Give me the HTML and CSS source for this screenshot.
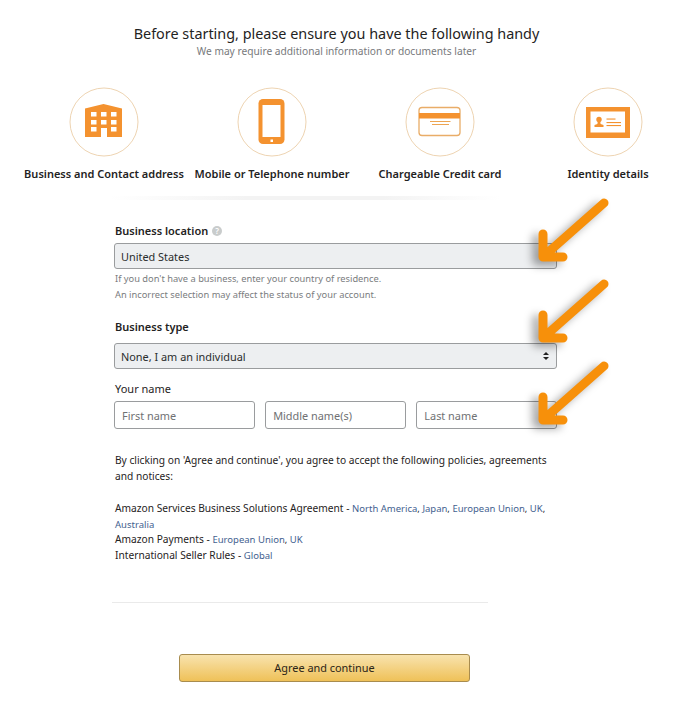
FILE: index.html
```html
<!DOCTYPE html>
<html lang="en">
<head>
    <meta charset="UTF-8">
    <meta name="viewport" content="width=device-width, initial-scale=1.0">
    <title>Before starting</title>
    <link rel="stylesheet" href="styles.css">
</head>
<body>

    <header class="intro">
        <h1>Before starting, please ensure you have the following handy</h1>
        <p>We may require additional information or documents later</p>
    </header>

    <div class="needs">
        <div class="need">
            <svg class="need-icon" width="70" height="70" viewBox="0 0 70 70">
                <circle class="ring" cx="35" cy="35" r="34"/>
                <path class="fill" d="M16 21.5 L34.5 17 L53 21.5 V50 H16 Z"/>
                <g class="hole">
                    <rect x="22" y="25" width="5.5" height="4.5"/>
                    <rect x="32" y="25" width="5.5" height="4.5"/>
                    <rect x="42" y="25" width="5.5" height="4.5"/>
                    <rect x="22" y="33" width="5.5" height="4.5"/>
                    <rect x="32" y="33" width="5.5" height="4.5"/>
                    <rect x="42" y="33" width="5.5" height="4.5"/>
                    <rect x="22" y="40" width="5.5" height="4.5"/>
                    <rect x="42" y="40" width="5.5" height="4.5"/>
                    <rect x="32" y="41" width="6" height="9"/>
                </g>
            </svg>
            <span>Business and Contact address</span>
        </div>
        <div class="need">
            <svg class="need-icon" width="70" height="70" viewBox="0 0 70 70">
                <circle class="ring" cx="35" cy="35" r="34"/>
                <rect class="fill" x="21.5" y="12" width="26" height="45" rx="4.5"/>
                <rect class="hole" x="25.5" y="18" width="18" height="32"/>
                <rect class="hole" x="33.5" y="52.5" width="2.5" height="2.5"/>
            </svg>
            <span>Mobile or Telephone number</span>
        </div>
        <div class="need">
            <svg class="need-icon" width="70" height="70" viewBox="0 0 70 70">
                <circle class="ring" cx="35" cy="35" r="34"/>
                <rect class="card-edge" x="14" y="20.5" width="41" height="28" rx="3"/>
                <rect class="fill" x="14" y="26" width="41" height="5.5"/>
                <rect class="card-line" x="25" y="34" width="20.5" height="1"/>
                <rect class="card-line" x="27" y="37" width="17" height="1"/>
            </svg>
            <span>Chargeable Credit card</span>
        </div>
        <div class="need">
            <svg class="need-icon" width="70" height="70" viewBox="0 0 70 70">
                <circle class="ring" cx="35" cy="35" r="34"/>
                <rect class="fill" x="13" y="20" width="44" height="31"/>
                <rect class="hole" x="17.5" y="24.5" width="34.5" height="21"/>
                <circle class="fill" cx="26" cy="32.5" r="2.7"/>
                <path class="fill" d="M24.8 34 H27.2 L27.6 37 L30.5 38 V40 H21.5 V38 L24.4 37 Z"/>
                <rect class="fill" x="33.5" y="31.5" width="9" height="1.1"/>
                <rect class="fill" x="33.5" y="35" width="14.5" height="1.1"/>
                <rect class="fill" x="33.5" y="38" width="14.5" height="1.1"/>
            </svg>
            <span>Identity details</span>
        </div>
    </div>

    <div class="fold"></div>

    <form class="seller-form">
        <div class="field-label strong">
            Business location
            <span class="help">?</span>
        </div>
        <input class="box filled" type="text" value="United States" readonly>
        <div class="hint first">If you don't have a business, enter your country of residence.</div>
        <div class="hint">An incorrect selection may affect the status of your account.</div>

        <div class="field-label strong type-label">Business type</div>
        <div class="select-wrap">
            <select class="box filled">
                <option>None, I am an individual</option>
            </select>
        </div>

        <div class="field-label name-label">Your name</div>
        <div class="name-row">
            <input class="box" type="text" placeholder="First name">
            <input class="box" type="text" placeholder="Middle name(s)">
            <input class="box" type="text" placeholder="Last name">
        </div>

        <p class="policy-lead">By clicking on 'Agree and continue', you agree to accept the following policies, agreements and notices:</p>

        <p class="policies">
            Amazon Services Business Solutions Agreement - <small><a href="#">North America</a>, <a href="#">Japan</a>, <a href="#">European Union</a>, <a href="#">UK</a>, <a href="#">Australia</a></small><br>
            Amazon Payments - <small><a href="#">European Union</a>, <a href="#">UK</a></small><br>
            International Seller Rules - <small><a href="#">Global</a></small>
        </p>

        <hr class="divider">

        <button class="agree" type="button">Agree and continue</button>
    </form>

    <!-- hand drawn arrows pasted over the screenshot -->
    <svg class="arrows" width="680" height="710" viewBox="0 0 680 710">
        <defs>
            <path id="arrow" d="M604 203 L544 256 M543 234 V257 H563"/>
        </defs>
        <use href="#arrow"/>
        <use href="#arrow" y="81"/>
        <use href="#arrow" y="163"/>
    </svg>

</body>
</html>
```

FILE: styles.css
```css
body {
    font-family: "Noto Sans", Arial, sans-serif;
    background-color: #fff;
    color: #1f2323;
    margin: 0;
    padding: 0;
    position: relative;
    height: 710px;
    overflow: hidden;
}

.intro {
    text-align: center;
    padding: 24px 7px 0 0;
}

.intro h1 {
    margin: 0;
    font-size: 14.4px;
    line-height: 19px;
    font-weight: 400;
}

.intro p {
    margin: 0;
    font-size: 10.2px;
    line-height: 16px;
    color: #77797c;
}

.needs {
    display: grid;
    grid-template-columns: repeat(4, 142px);
    column-gap: 26px;
    margin: 28px 0 0 33px;
}

.need {
    display: flex;
    flex-direction: column;
    align-items: center;
    font-size: 11px;
    line-height: 16px;
    font-weight: 600;
    white-space: nowrap;
}

.need-icon {
    display: block;
    margin-bottom: 9px;
}

.ring {
    fill: none;
    stroke: #eed4b2;
    stroke-width: 1;
}

.fill {
    fill: #f4922f;
}

.hole {
    fill: #fff;
}

.card-edge {
    fill: #fff;
    stroke: #e9ad68;
    stroke-width: 1.3;
}

.card-line {
    fill: #eda552;
}

.fold {
    height: 4px;
    margin: 14px 180px 0 110px;
    background: linear-gradient(to right, #fff, #f3f3f3 35%, #f3f3f3 70%, #fff);
}

.seller-form {
    width: 443px;
    margin: 23px 0 0 114px;
}

.field-label {
    font-size: 11px;
    line-height: 16px;
    margin-bottom: 4px;
    padding-left: 1px;
}

.strong {
    font-weight: 600;
}

.help {
    display: inline-block;
    width: 10px;
    height: 10px;
    line-height: 10px;
    margin-left: 1px;
    border-radius: 50%;
    background-color: #c9cccc;
    color: #fff;
    font-size: 8px;
    text-align: center;
    vertical-align: 1px;
}

.box {
    display: block;
    box-sizing: border-box;
    width: 100%;
    height: 26px;
    padding: 0 6px;
    font-family: inherit;
    font-size: 10.9px;
    color: #2a2d2d;
    background-color: #fff;
    border: 1px solid #9a9c9e;
    border-radius: 3px;
    outline: none;
}

.box::placeholder {
    color: #6f7173;
    opacity: 1;
}

.filled {
    background-color: #edeff1;
}

.hint {
    font-size: 9.3px;
    line-height: 16px;
    color: #7a7c7e;
    padding-left: 1px;
}

.hint.first {
    margin-top: 2px;
}

.type-label {
    margin-top: 16px;
    margin-bottom: 8px;
}

.select-wrap {
    position: relative;
}

.select-wrap select {
    appearance: none;
}

.select-wrap::before,
.select-wrap::after {
    content: "";
    position: absolute;
    right: 8px;
    border-left: 3px solid transparent;
    border-right: 3px solid transparent;
}

.select-wrap::before {
    top: 9px;
    border-bottom: 3px solid #222;
}

.select-wrap::after {
    top: 14px;
    border-top: 3px solid #222;
}

.name-label {
    margin-top: 12px;
}

.name-row {
    display: grid;
    grid-template-columns: repeat(3, 1fr);
    gap: 10.5px;
}

.name-row .box {
    height: 28px;
    padding: 0 7px;
}

.policy-lead {
    margin: 23px 0 0;
    padding-left: 1px;
    font-size: 10.2px;
    line-height: 16px;
}

.policies {
    margin: 17px 0 0;
    padding-left: 1px;
    font-size: 10.2px;
    line-height: 15.7px;
}

.policies small {
    font-size: 9.5px;
}

.policies a {
    color: #43618f;
    text-decoration: none;
}

.divider {
    width: 376px;
    height: 1px;
    margin: 38px 0 0 -2px;
    border: none;
    background-color: #eaeaea;
}

.agree {
    display: block;
    width: 291px;
    height: 28px;
    margin: 51px 0 0 65px;
    padding: 0;
    font-family: inherit;
    font-size: 10.9px;
    color: #2b2417;
    background: linear-gradient(#f8e3ae, #efc158);
    border: 1px solid #a88c4e;
    border-radius: 3px;
}

.arrows {
    position: absolute;
    top: 0;
    left: 0;
    fill: none;
    stroke: #f7900a;
    stroke-width: 9;
    stroke-linecap: round;
    stroke-linejoin: round;
    filter: drop-shadow(-6px 4px 4px rgba(0, 0, 0, 0.35));
    pointer-events: none;
}
```
